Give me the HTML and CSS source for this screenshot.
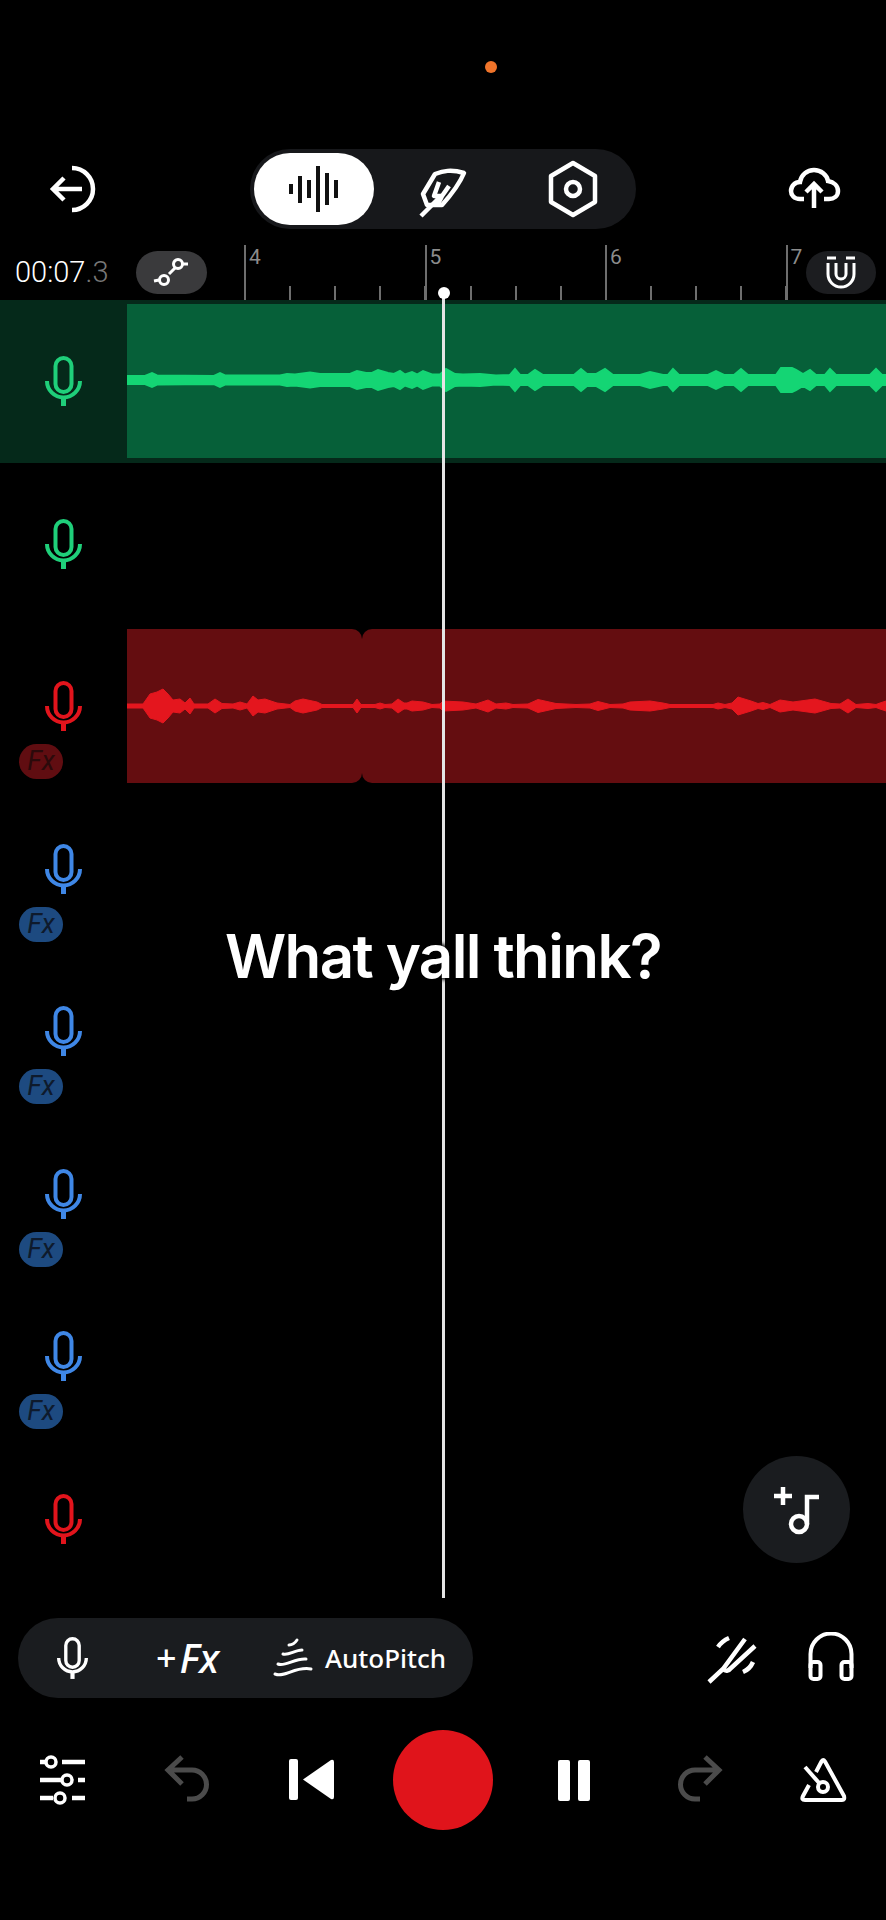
FILE: index.html
```html
<!DOCTYPE html>
<html lang="en">
<head>
  <meta charset="UTF-8" />
  <meta name="viewport" content="width=device-width, initial-scale=1.0" />
  <title>Studio</title>
  <link rel="stylesheet" href="styles.css">
</head>
<body>

  <!-- === ICONS === -->
  <svg class="defs" aria-hidden="true">
    <symbol id="i-mic" viewBox="0 0 37 50">
      <g fill="none" stroke="currentColor" stroke-width="4">
        <rect x="10.5" y="2" width="16" height="34" rx="8" />
        <path d="M2 25a16.500 16.500 0 0 0 33 0" />
        <path d="M18.500 41v9" stroke-width="5" />
      </g>
    </symbol>
    <symbol id="i-undo" viewBox="0 0 56 56">
      <path d="M8 18H32A14.5 14.5 0 0 1 32 47H27M22 5L8 18L22 32" fill="none" stroke="#4b4b4b" stroke-width="5" />
    </symbol>
  </svg>

  <!-- === TOP === -->
  <div class="status"><span class="status-dot"></span></div>

  <div class="topbar">
    <svg class="ico-exit" width="50" height="50" viewBox="0 0 50 50" fill="none" stroke="#fff" stroke-width="4.5">
      <path d="M5 25H34M16 14L5 25L16 36" />
      <path d="M24 4A21 21 0 0 1 24 46" />
    </svg>

    <div class="modes">
      <div class="mode mode-active">
        <svg width="50" height="46" viewBox="0 0 50 46" fill="#111">
          <rect x="0" y="18" width="4" height="10" />
          <rect x="9" y="10" width="4" height="27" />
          <rect x="18" y="14" width="4" height="18" />
          <rect x="27" y="0" width="4" height="46" />
          <rect x="36" y="7" width="4" height="32" />
          <rect x="45" y="14" width="4" height="18" />
        </svg>
      </div>
      <div class="mode mode-feather">
        <svg width="90" height="90" viewBox="0 0 90 90" fill="none" stroke="#fff" stroke-width="4.500" stroke-linejoin="round">
          <path d="M65 28C52 24 44 26 36 29L24 49L28 60H43C52 50 60 40 65 28Z" />
          <path d="M22 71L43 50M40 37L35 51H43L50 41M43 51L39 59" />
        </svg>
      </div>
      <div class="mode mode-hex">
        <svg width="52" height="58" viewBox="0 0 52 58" fill="none" stroke="#fff" stroke-width="4.5" stroke-linejoin="round">
          <path d="M26 3L48 16V42L26 55L4 42V16Z" />
          <circle cx="26" cy="29" r="7" />
        </svg>
      </div>
    </div>

    <svg class="ico-cloud" width="54" height="44" viewBox="0 0 54 44" fill="none" stroke="#fff" stroke-width="4.5">
      <path d="M16 32H12C6 32 3 28 3 24C3 19 7 15 12 15C13 8 19 3 26 3C33 3 39 8 40 14C46 15 50 19 50 24C50 29 46 32 41 32H36" />
      <path d="M26 41V17M18 25L26 17L34 25" />
    </svg>
  </div>

  <!-- === TIMELINE === -->
  <div class="timeline">
    <div class="clock">00:07<span class="clock-ms">.3</span></div>
    <div class="chip chip-nodes">
      <svg width="40" height="34" viewBox="0 0 40 34" fill="none" stroke="#fff" stroke-width="3">
        <path d="M2 25L7 24M17 18L23 12M30 8H36" />
        <circle cx="12" cy="24" r="4.500" />
        <circle cx="26" cy="8" r="4.500" />
      </svg>
    </div>
    <div class="ruler">
      <div class="beat">4</div>
      <div class="beat">5</div>
      <div class="beat">6</div>
      <div class="beat beat-last">7</div>
    </div>
    <div class="chip chip-magnet">
      <svg width="32" height="34" viewBox="0 0 32 34" fill="none" stroke="#fff" stroke-width="3">
        <path d="M2 2H11M21 2H30" />
        <path d="M3 7V18A13 13 0 0 0 29 18V7" />
        <path d="M11 7V18A5 5 0 0 0 21 18V7" />
      </svg>
    </div>
  </div>

  <!-- === TRACKS === -->
  <div class="tracks">
    <div class="track track-selected">
      <div class="track-head c-green">
        <svg class="mic"><use href="#i-mic" /></svg>
      </div>
      <div class="clip clip-green">
        <svg class="wave wave-green" viewBox="127 -20 759 40">
          <path id="wave-g" d="M127 0V-4L145 -4L152 -7L157 -4.5L214 -4L220 -7L225 -4.5L280 -4.5L287 -6L295 -5.5L310 -7.5L320 -6L335 -6L350 -6L357 -9L366 -7L372 -7L378 -10L388 -7L394 -6L400 -9L405 -5.5L412 -8L417 -5.5L423 -9L432 -5.5L440 -5.5L446 -11L455 -6L463 -5.5L480 -6L496 -4.5L510 -5L515 -11L520 -5L528 -5L535 -10L543 -5L550 -5L574 -5L581 -11L587 -6L596 -6L605 -11L613 -5L640 -5L650 -8L663 -5L668 -5L673 -11L679 -5L708 -5L716 -9L724 -5L734 -5L741 -11L748 -5L776 -5L781 -12L792 -12L796 -10L803 -6L810 -10L816 -5L825 -5L830 -11L836 -5L870 -5L876 -11L882 -5L886 -5V0Z" />
          <use href="#wave-g" transform="scale(1 -1)" />
        </svg>
      </div>
    </div>

    <div class="track">
      <div class="track-head c-green">
        <svg class="mic"><use href="#i-mic" /></svg>
      </div>
    </div>

    <div class="track">
      <div class="track-head c-red">
        <svg class="mic"><use href="#i-mic" /></svg>
        <span class="fx">Fx</span>
      </div>
      <div class="clip clip-red">
        <div class="part part-a"></div>
        <div class="part part-b"></div>
        <svg class="wave wave-red" viewBox="127 -20 759 40">
          <path id="wave-r" d="M127 0V-2L143 -2L150 -12L157 -14L163 -17L168 -12L173 -6L180 -7L185 -3L190 -8L194 -2L208 -2L215 -7L222 -2.5L233 -2L240 -4L247 -2L253 -10L258 -6L265 -7L277 -3L290 -1.5L295 -5L303 -7L317 -4L322 -1.5L353 -1.5L357 -7L361 -1.5L375 -1.5L380 -3L385 -1.5L392 -2L398 -7L404 -3L407 -3L412 -5L423 -4L432 -1.5L440 -2L443 -5L463 -4L476 -2L488 -6L496 -2L506 -3L513 -1.5L528 -2L538 -6.5L556 -2.5L576 -1.5L590 -2L598 -4.5L610 -1.5L623 -2L630 -4L650 -5L663 -3L670 -1.5L713 -1.5L718 -3L725 -1.5L732 -3L738 -9L751 -5L758 -2.5L763 -3.5L770 -1.5L780 -6L793 -4L815 -7L831 -2.5L840 -2L848 -7L856 -1.5L868 -2.5L876 -1.5L880 -3L886 -5V0Z" />
          <use href="#wave-r" transform="scale(1 -1)" />
        </svg>
      </div>
    </div>

    <div class="track">
      <div class="track-head c-blue">
        <svg class="mic"><use href="#i-mic" /></svg>
        <span class="fx">Fx</span>
      </div>
    </div>
    <div class="track">
      <div class="track-head c-blue">
        <svg class="mic"><use href="#i-mic" /></svg>
        <span class="fx">Fx</span>
      </div>
    </div>
    <div class="track">
      <div class="track-head c-blue">
        <svg class="mic"><use href="#i-mic" /></svg>
        <span class="fx">Fx</span>
      </div>
    </div>
    <div class="track">
      <div class="track-head c-blue">
        <svg class="mic"><use href="#i-mic" /></svg>
        <span class="fx">Fx</span>
      </div>
    </div>
    <div class="track">
      <div class="track-head c-red">
        <svg class="mic"><use href="#i-mic" /></svg>
      </div>
    </div>
  </div>

  <!-- === BOTTOM === -->
  <div class="tools">
    <div class="tool-pill">
      <svg class="tool-mic"><use href="#i-mic" /></svg>
      <div class="add-fx"><span class="add-plus">+</span><span class="add-name">Fx</span></div>
      <svg class="ico-pitch" width="40" height="42" viewBox="0 0 40 42" fill="none" stroke="#fff" stroke-width="3" stroke-linecap="round">
        <path d="M16 8C19 8 22 6 24 3" />
        <path d="M10 17C15 19 22 13 29 13" />
        <path d="M5 27C12 30 22 21 33 22" />
        <path d="M2 37C12 41 22 29 38 32" />
      </svg>
      <span class="tool-label">AutoPitch</span>
    </div>

    <div class="tool-right">
      <svg width="56" height="56" viewBox="0 0 56 56" fill="none" stroke="#fff" stroke-width="4.500">
        <path d="M4 50L18 37L40 7" />
        <path d="M18 37Q22 41 26 36L50 14" />
        <path d="M13 15Q17 9 24 6M38 40Q45 37 48 30" />
      </svg>
      <svg width="48" height="50" viewBox="0 0 48 50" fill="none" stroke="#fff" stroke-width="4">
        <path d="M3.500 36V22A20.500 20.500 0 0 1 44.500 22V36" />
        <rect x="3.500" y="30" width="10" height="17" rx="3" />
        <rect x="34.500" y="30" width="10" height="17" rx="3" />
      </svg>
    </div>
  </div>

  <div class="transport">
    <svg width="50" height="60" viewBox="0 0 50 60" fill="none" stroke="#fff" stroke-width="4.500">
      <path d="M2 12H7M24 12H47M2 30H23M40 30H47M2 48H15M34 48H47" />
      <circle cx="13" cy="12" r="5" stroke-width="3.500" />
      <circle cx="29" cy="30" r="5" stroke-width="3.500" />
      <circle cx="22" cy="48" r="5" stroke-width="3.500" />
    </svg>
    <svg class="ico-step" width="56" height="56"><use href="#i-undo" /></svg>
    <svg width="46" height="42" viewBox="0 0 46 42" fill="#fff">
      <rect x="0" y="0" width="9" height="41" rx="2" />
      <path d="M14 20.500L42 1Q45 0 45 3V38Q45 41 42 40Z" />
    </svg>
    <div class="rec"></div>
    <div class="pause"><span></span><span></span></div>
    <svg class="ico-step ico-redo" width="56" height="56"><use href="#i-undo" /></svg>
    <svg width="50" height="52" viewBox="0 0 50 52" fill="none" stroke="#fff" stroke-width="4">
      <path d="M18 18L23.500 7.500Q25 4.500 27 7.500L46 42Q47 46 44 46H7Q3 46 5 42L11 31" />
      <path d="M7 13L22 30" />
      <circle cx="25" cy="33" r="5" />
    </svg>
  </div>

  <!-- === OVERLAYS === -->
  <div class="playhead"></div>
  <div class="caption">What yall think?</div>
  <div class="add-track">
    <svg width="60" height="50" viewBox="0 0 60 50" fill="none" stroke="#fff" stroke-width="4.500">
      <path d="M7 11H25M16 2V20" />
      <path d="M40 39V12H52" />
      <circle cx="32" cy="39" r="8" />
    </svg>
  </div>

</body>
</html>
```

FILE: styles.css
```css
* {
  margin: 0;
  padding: 0;
  box-sizing: border-box;
}

html, body {
  height: 100%;
  overflow: hidden;
}

body {
  position: relative;
  background: #000;
  color: #fff;
  font-family: Roboto, sans-serif;
}

svg {
  display: block;
  flex: none;
}

.defs {
  display: none;
}

/* top */
.status {
  height: 149px;
  padding-top: 61px;
  display: flex;
  justify-content: center;
}

.status-dot {
  width: 12px;
  height: 12px;
  margin-left: 96px;
  border-radius: 50%;
  background: #f0742a;
}

.topbar {
  height: 80px;
  padding: 0 44px 0 48px;
  display: flex;
  align-items: center;
}

.modes {
  width: 386px;
  height: 80px;
  margin-left: 152px;
  padding-left: 4px;
  display: flex;
  align-items: center;
  background: #17181b;
  border-radius: 40px;
}

.mode {
  display: flex;
  align-items: center;
  justify-content: center;
}

.mode-active {
  width: 120px;
  height: 72px;
  background: #fff;
  border-radius: 36px;
}

.mode-feather {
  width: 90px;
  margin-left: 25px;
  margin-top: 2px;
}

.mode-hex {
  margin-left: 58px;
}

.ico-cloud {
  margin-left: auto;
}

/* timeline */
.timeline {
  position: relative;
  height: 71px;
  display: flex;
}

.clock {
  width: 136px;
  padding: 28px 0 0 15px;
  font-size: 29px;
  font-weight: 300;
  line-height: 30px;
  white-space: nowrap;
}

.clock-ms {
  color: #777;
}

.chip {
  height: 43px;
  margin-top: 22px;
  display: flex;
  align-items: center;
  justify-content: center;
  border-radius: 22px;
}

.chip-nodes {
  width: 71px;
  background: #3a3a3c;
}

.chip-magnet {
  position: absolute;
  top: 0;
  right: 10px;
  width: 70px;
  background: #1c1d20;
  box-shadow: -10px 0 1px #000;
}

.ruler {
  margin: 16px 0 0 37px;
  display: flex;
  flex: 1;
  overflow: hidden;
}

.beat {
  flex: none;
  width: 180.5px;
  height: 55px;
  padding-left: 3px;
  border-left: 2px solid #6e6e6e;
  color: #8c8c8c;
  font-size: 21px;
  line-height: 24px;
  background: repeating-linear-gradient(to right, transparent 0 43px, #6e6e6e 43px 45.125px) bottom left / 100% 14px no-repeat;
}

.beat-last {
  background: none;
}

/* tracks */
.track {
  height: 162.5px;
  display: flex;
}

.track-selected {
  background: #05291a;
}

.track-head {
  width: 127px;
  flex: none;
  padding: 56px 0 0 19px;
}

.c-green { color: #1fcf7a; }
.c-red { color: #e2141c; }
.c-blue { color: #3f87e6; }

.mic {
  width: 37px;
  height: 50px;
  margin-left: 26px;
}

.fx {
  display: block;
  width: 44px;
  height: 35px;
  margin-top: 13px;
  border-radius: 18px;
  font-size: 27px;
  font-style: italic;
  line-height: 35px;
  text-align: center;
}

.c-red .fx {
  background: #600d11;
  color: #2b0a0b;
}

.c-blue .fx {
  background: #1d4a80;
  color: #0e1a2c;
}

.clip {
  position: relative;
  flex: 1;
  margin: 4px 0 5px;
  display: flex;
}

.clip-green {
  background: #066039;
}

.wave {
  position: absolute;
  top: 50%;
  left: 0;
  width: 759px;
  height: 40px;
  margin-top: -20px;
}

.wave-green {
  margin-top: -21px;
  fill: #14d574;
  stroke: #14d574;
  stroke-width: 2;
}

.wave-red {
  fill: #e4161e;
  stroke: #e4161e;
  stroke-width: 1;
}

.part {
  background: #640d10;
}

.part-a {
  width: 235px;
  border-radius: 0 10px 10px 0;
}

.part-b {
  flex: 1;
  border-radius: 10px 0 0 10px;
}

/* bottom */
.tools {
  height: 98px;
  padding: 18px 31px 0 18px;
  display: flex;
  align-items: flex-start;
}

.tool-pill {
  width: 455px;
  height: 80px;
  padding-left: 39px;
  display: flex;
  align-items: center;
  background: #1a1c1f;
  border-radius: 40px;
}

.tool-mic {
  width: 31px;
  height: 42px;
  color: #fff;
}

.add-fx {
  width: 64px;
  margin-left: 68px;
  display: flex;
  align-items: center;
  font-family: "Noto Sans", sans-serif;
  line-height: 40px;
  white-space: nowrap;
}

.add-plus {
  font-size: 36px;
  font-weight: 500;
}

.add-name {
  margin-left: 3px;
  font-size: 40px;
  font-weight: 500;
  font-style: italic;
}

.ico-pitch {
  margin-left: 53px;
}

.tool-label {
  margin-left: 12px;
  font-family: "Noto Sans", sans-serif;
  font-size: 26px;
  font-weight: 500;
}

.tool-right {
  margin-left: auto;
  padding-top: 14px;
  display: flex;
  gap: 46px;
}

.transport {
  margin-top: 32px;
  display: grid;
  grid-template-columns: 126px 124px 123px 140px 122px 127px 122px;
  justify-items: center;
  align-items: center;
  height: 100px;
}

.ico-redo {
  transform: scaleX(-1);
}

.rec {
  width: 100px;
  height: 100px;
  border-radius: 50%;
  background: #e0141b;
}

.pause {
  display: flex;
  gap: 8px;
}

.pause span {
  width: 12px;
  height: 41px;
  background: #fff;
  border-radius: 2px;
}

/* overlays */
.playhead {
  position: absolute;
  top: 293px;
  left: 442px;
  width: 2.5px;
  height: 1305px;
  background: #e4e4e4;
}

.playhead::before {
  content: "";
  position: absolute;
  top: -6px;
  left: -4.5px;
  width: 12px;
  height: 12px;
  border-radius: 50%;
  background: #fff;
}

.caption {
  position: absolute;
  top: 920px;
  left: 0;
  width: 886px;
  font-family: Inter, sans-serif;
  font-size: 60px;
  font-weight: 600;
  letter-spacing: -1.6px;
  line-height: 72px;
  text-align: center;
  text-shadow: 0 0 5px #000, 0 0 5px #000, 0 0 5px #000;
}

.add-track {
  position: absolute;
  top: 1456px;
  left: 743px;
  width: 107px;
  height: 107px;
  display: flex;
  align-items: center;
  justify-content: center;
  background: #1a1c1f;
  border-radius: 50%;
}
```
